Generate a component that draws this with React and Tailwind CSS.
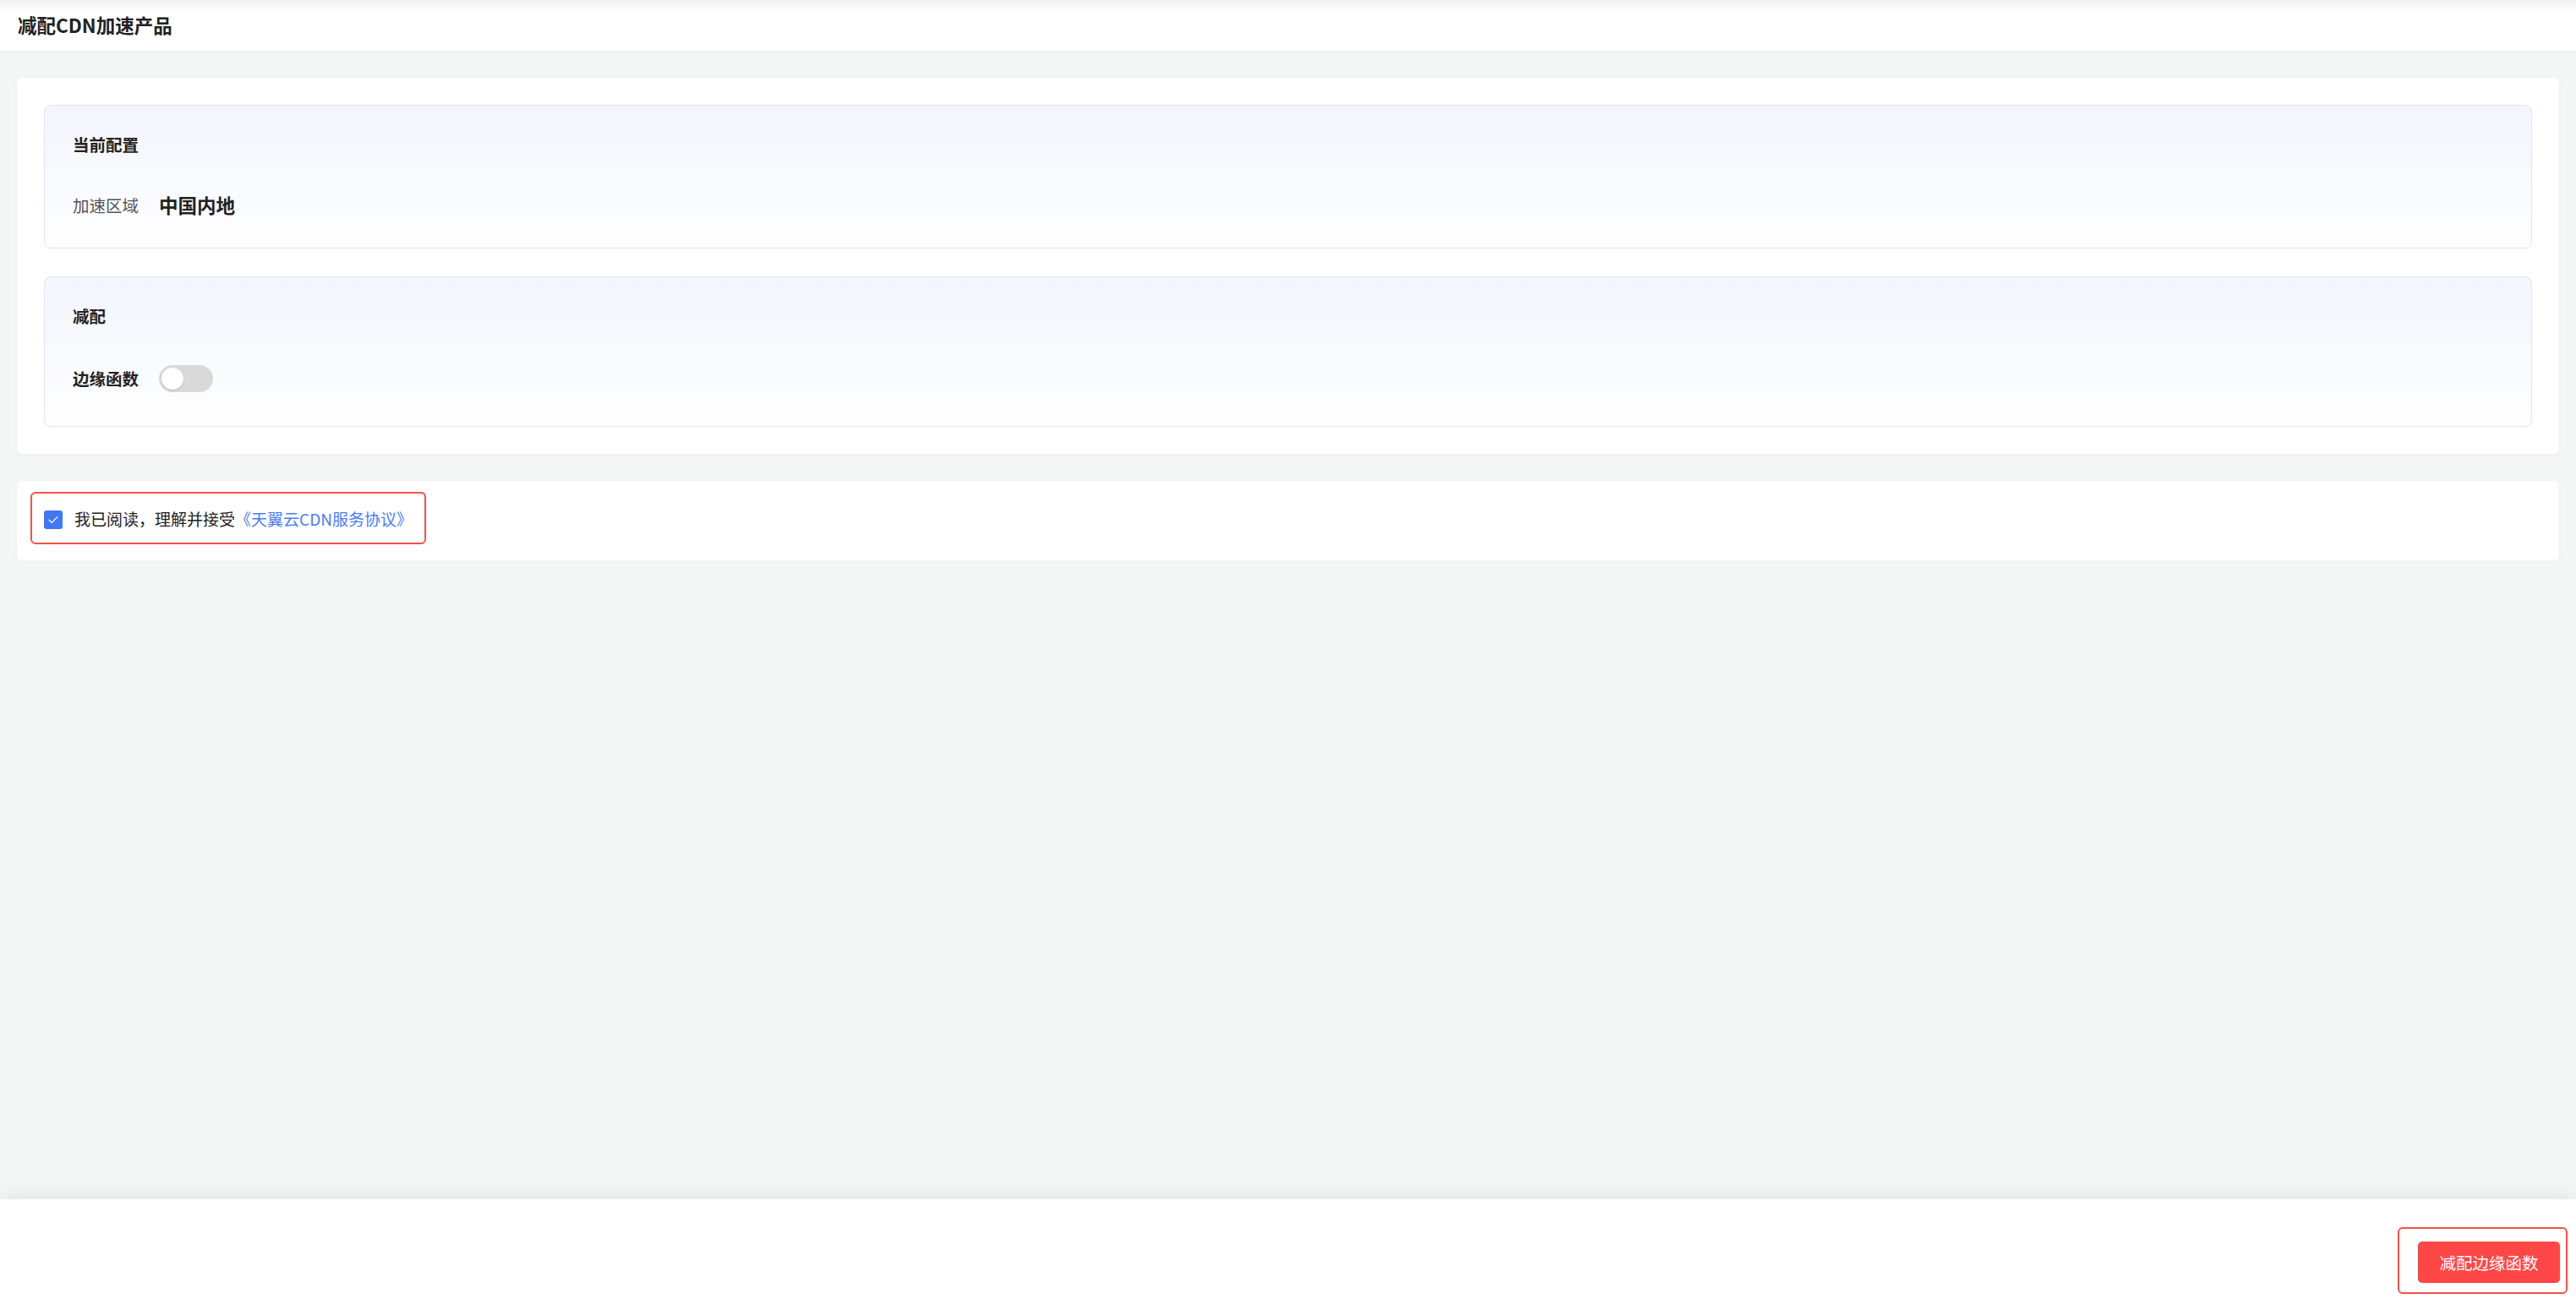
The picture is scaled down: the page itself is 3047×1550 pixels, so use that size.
import React, { useState } from "react";

const font = { fontFamily: '"Noto Sans CJK SC", "Noto Sans", sans-serif' };

function Toggle({ on, onChange }) {
  return (
    <button
      type="button"
      onClick={() => onChange(!on)}
      className={`relative flex h-[32px] w-[64px] items-center rounded-full px-[3px] ${
        on ? "justify-end bg-[#3f78f6]" : "justify-start bg-[#d9d9d9]"
      }`}
    >
      <span className="h-[26px] w-[26px] rounded-full bg-white shadow-[0_1px_2px_rgba(0,0,0,0.15)]" />
    </button>
  );
}

function Panel({ title, children, className }) {
  return (
    <div
      className={`rounded-lg border border-[#e2e4ef] bg-[linear-gradient(to_bottom,#f2f5fd,#fefefe)] px-[33px] ${className}`}
    >
      <div className="text-[19.5px] font-bold leading-[28px] text-[#222]">{title}</div>
      {children}
    </div>
  );
}

export default function App() {
  const [edge, setEdge] = useState(false);
  const [agreed, setAgreed] = useState(true);

  return (
    <div className="flex h-[1550px] flex-col bg-[#f4f5f5]" style={font}>
      {/* header */}
      <header className="flex h-[60px] shrink-0 items-center bg-[linear-gradient(to_bottom,#eff0f1_0px,#ffffff_14px)] pl-[21px] shadow-[0_2px_6px_rgba(0,0,0,0.03)]">
        <h1 className="text-[22.5px] font-bold text-[#222]">减配CDN加速产品</h1>
      </header>

      <main className="flex flex-1 flex-col gap-8 px-5 pt-8">
        <section className="rounded-md bg-white p-8 shadow-[0_1px_4px_rgba(0,0,0,0.03)]">
          <Panel title="当前配置" className="h-[170px] pt-[32px]">
            <div className="mt-[42px] flex h-[32px] items-center gap-6">
              <span className="text-[19.5px] text-[#555]">加速区域</span>
              <span className="text-[22.5px] font-bold text-[#222]">中国内地</span>
            </div>
          </Panel>
          <Panel title="减配" className="mt-[33px] h-[178px] pt-[32px]">
            <div className="mt-[44px] flex h-[32px] items-center gap-6">
              <span className="text-[19.5px] font-bold text-[#222]">边缘函数</span>
              <Toggle on={edge} onChange={setEdge} />
            </div>
          </Panel>
        </section>

        <section className="h-[94px] rounded-md bg-white pl-4 pt-[13px] shadow-[0_1px_4px_rgba(0,0,0,0.03)]">
          <label className="inline-flex h-[62px] cursor-pointer items-center gap-[14px] rounded-md border-2 border-[#f4504b] pl-[14px] pr-[14px] pt-[3px]">
            <span
              onClick={() => setAgreed(!agreed)}
              className={`flex h-[22px] w-[22px] items-center justify-center rounded-[3px] ${
                agreed ? "bg-[#3f78f6]" : "border border-[#ccc] bg-white"
              }`}
            >
              {agreed && (
                <svg width="12" height="10" viewBox="0 0 12 10" fill="none">
                  <path d="M1 5.2 4.3 8.4 11 1.6" stroke="#fff" strokeWidth="1.3" strokeLinecap="round" strokeLinejoin="round" />
                </svg>
              )}
            </span>
            <span className="text-[19px] text-[#222]">
              我已阅读，理解并接受
              <a href="#" className="text-[#4a7cf6]">
                《天翼云CDN服务协议》
              </a>
            </span>
          </label>
        </section>
      </main>

      {/* footer */}
      <footer className="flex h-[131px] shrink-0 justify-end bg-white pr-[10px] pt-[33px] shadow-[0_-6px_18px_rgba(0,0,0,0.06)]">
        <div className="h-[79px] rounded-md border-2 border-[#f4504b] pb-[11px] pl-[22px] pr-[7px] pt-[15px]">
          <button className="flex h-[49px] w-[168px] items-center justify-center rounded-[5px] bg-[#ff4646] text-[19.5px] text-white">
            减配边缘函数
          </button>
        </div>
      </footer>
    </div>
  );
}
